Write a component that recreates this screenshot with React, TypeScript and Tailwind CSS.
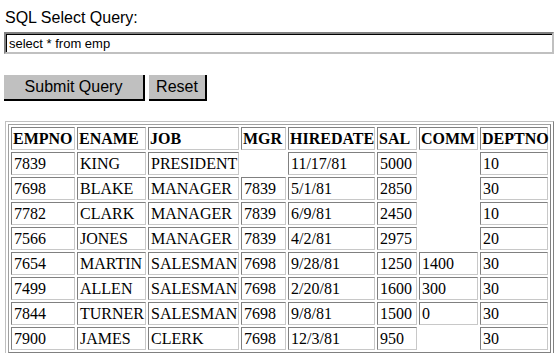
import React from "react";

const headers = ["EMPNO", "ENAME", "JOB", "MGR", "HIREDATE", "SAL", "COMM", "DEPTNO"];
const widths = ["w-[64px]", "w-[69px]", "w-[91px]", "w-[45px]", "w-[87px]", "w-[40px]", "w-[59px]", "w-[68px]"];
const rows: string[][] = [
  ["7839", "KING", "PRESIDENT", "", "11/17/81", "5000", "", "10"],
  ["7698", "BLAKE", "MANAGER", "7839", "5/1/81", "2850", "", "30"],
  ["7782", "CLARK", "MANAGER", "7839", "6/9/81", "2450", "", "10"],
  ["7566", "JONES", "MANAGER", "7839", "4/2/81", "2975", "", "20"],
  ["7654", "MARTIN", "SALESMAN", "7698", "9/28/81", "1250", "1400", "30"],
  ["7499", "ALLEN", "SALESMAN", "7698", "2/20/81", "1600", "300", "30"],
  ["7844", "TURNER", "SALESMAN", "7698", "9/8/81", "1500", "0", "30"],
  ["7900", "JAMES", "CLERK", "7698", "12/3/81", "950", "", "30"],
];

const cellBorder =
  "border border-t-[#808080] border-l-[#808080] border-r-[#c8c8c8] border-b-[#c8c8c8]";

export default function App() {
  return (
    <div className="w-[560px] h-[353px] overflow-hidden bg-white text-black pl-[4px]">
      <div
        className="pt-[9px] pl-[1px] text-[16px] leading-[18px] text-black"
        style={{ fontFamily: '"Liberation Sans", Arial, sans-serif' }}
      >
        SQL Select Query:
      </div>
      <div className="mt-[5px] w-[550px] h-[22px] border-2 border-t-[#808080] border-l-[#808080] border-r-[#c0c0c0] border-b-[#c0c0c0]">
        <div
          className="h-full border-t border-l border-t-black border-l-black flex items-center pl-[2px] text-[13px]"
          style={{ fontFamily: '"Liberation Sans", Arial, sans-serif' }}
        >
          select * from emp
        </div>
      </div>
      <div className="mt-[21px] flex gap-[4px]" style={{ fontFamily: '"Liberation Sans", Arial, sans-serif' }}>
        <div className="w-[141px] h-[26px] bg-[#c0c0c0] border-r-2 border-b-2 border-r-black border-b-black flex items-center justify-center text-[16px]">
          Submit Query
        </div>
        <div className="w-[58px] h-[26px] bg-[#c0c0c0] border-r-2 border-b-2 border-r-black border-b-black flex items-center justify-center text-[16px]">
          Reset
        </div>
      </div>
      <div className="mt-[20px] ml-[1px] w-[549px] border border-t-[#c0c0c0] border-l-[#c0c0c0] border-r-[#808080] border-b-[#808080] p-[2px]">
        <table
          className="table-fixed w-[543px] border-separate border-spacing-[2px] border border-t-[#a0a0a0] border-l-[#a0a0a0] border-r-[#808080] border-b-[#808080] text-[16px] leading-[19px]"
          style={{ fontFamily: '"Liberation Serif", "Times New Roman", serif' }}
        >
          <thead>
            <tr>
              {headers.map((h, i) => (
                <th
                  key={h}
                  className={`${cellBorder} ${widths[i]} py-[1px] pl-[1px] pr-0 font-bold text-left whitespace-nowrap overflow-visible`}
                >
                  {h}
                </th>
              ))}
            </tr>
          </thead>
          <tbody>
            {rows.map((r, i) => (
              <tr key={i}>
                {r.map((c, j) => (
                  <td
                    key={j}
                    className={`${c ? cellBorder : "border border-transparent"} py-[1px] pl-[2px] pr-0 text-left whitespace-nowrap`}
                  >
                    {c}
                  </td>
                ))}
              </tr>
            ))}
          </tbody>
        </table>
      </div>
    </div>
  );
}
